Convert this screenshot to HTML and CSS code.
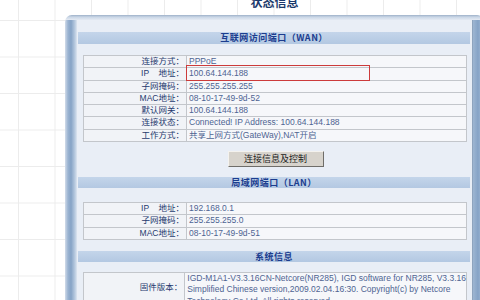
FILE: index.html
```html
<!DOCTYPE html>
<html>
<head>
<meta charset="utf-8">
<link rel="stylesheet" href="styles.css">
</head>
<body>
<div class="page">
  <div class="title">状态信息</div>
  <div class="panel">
    <div class="inner">
      <div class="bar bar-wan">互联网访问端口（WAN）</div>
      <table class="info t-wan">
        <tr><td class="lbl">连接方式：</td><td class="val">PPPoE</td></tr>
        <tr><td class="lbl">IP&nbsp;&nbsp;&nbsp;&nbsp;地址：</td><td class="val mark-cell"><span class="mark"></span>100.64.144.188</td></tr>
        <tr><td class="lbl">子网掩码：</td><td class="val">255.255.255.255</td></tr>
        <tr><td class="lbl">MAC地址：</td><td class="val">08-10-17-49-9d-52</td></tr>
        <tr><td class="lbl">默认网关：</td><td class="val">100.64.144.188</td></tr>
        <tr><td class="lbl">连接状态：</td><td class="val">Connected! IP Address: 100.64.144.188</td></tr>
        <tr><td class="lbl">工作方式：</td><td class="val">共享上网方式(GateWay),NAT开启</td></tr>
      </table>
      <div class="btn-row"><button class="btn">连接信息及控制</button></div>
      <div class="bar bar-lan">局域网端口（LAN）</div>
      <table class="info t-lan">
        <tr><td class="lbl">IP&nbsp;&nbsp;&nbsp;&nbsp;地址：</td><td class="val">192.168.0.1</td></tr>
        <tr><td class="lbl">子网掩码：</td><td class="val">255.255.255.0</td></tr>
        <tr><td class="lbl">MAC地址：</td><td class="val">08-10-17-49-9d-51</td></tr>
      </table>
      <div class="bar bar-sys">系统信息</div>
      <table class="info t-sys">
        <tr><td class="lbl lbl-top">固件版本：</td><td class="val multi">IGD-M1A1-V3.3.16CN-Netcore(NR285), IGD software for NR285, V3.3.16<br>Simplified Chinese version,2009.02.04.16:30. Copyright(c) by Netcore<br>Technology Co.Ltd. All rights reserved.</td></tr>
      </table>
    </div>
  </div>
</div>
</body>
</html>
```
FILE: styles.css
```css
html, body {
  margin: 0;
  padding: 0;
  width: 480px;
  height: 300px;
  overflow: hidden;
}
body {
  background-color: #ffffff;
  background-image:
    linear-gradient(to right, #ececec 1px, transparent 1px),
    linear-gradient(to bottom, #ececec 1px, transparent 1px);
  background-size: 36.5px 36.5px;
  background-position: 18px 20px;
  font-family: "Liberation Sans", "Noto Sans CJK SC", sans-serif;
}
.page {
  display: flex;
  flex-direction: column;
  padding-left: 65px;
  width: 419px;
}
.title {
  font-family: "Noto Sans CJK SC", sans-serif;
  font-weight: bold;
  font-size: 12px;
  line-height: 12px;
  height: 12px;
  color: #1c3a6c;
  text-align: center;
  margin-top: -4px;
  margin-bottom: 7px;
}
.panel {
  border-top-left-radius: 7px;
  border-top-right-radius: 7px;
  padding-top: 5px;
  padding-left: 12px;
  padding-right: 12px;
  background:
    linear-gradient(to bottom, #9db0c8 0, #c9d6e6 2px, #e4eaf3 5px, transparent 5px),
    linear-gradient(to right, #d2dcea 0, #9ab3d1 3px, #86a3c6 6px, #b9cbe0 10px, #dde5f0 12px, transparent 12px),
    linear-gradient(to left, #d2dcea 0, #9ab3d1 3px, #86a3c6 6px, #9eb6d2 11px, #7f92aa 12px, transparent 12px),
    #e9eef6;
  height: 300px;
}
.inner {
  display: flex;
  flex-direction: column;
  padding-top: 12px;
}
.bar {
  margin-left: 1px;
  margin-right: 2px;
  height: 12px;
  line-height: 12px;
  background: linear-gradient(to bottom, #c4d5ea, #b3c8e2);
  color: #1b3d8f;
  font-family: "Noto Sans CJK SC", sans-serif;
  font-weight: bold;
  font-size: 9px;
  letter-spacing: 0.5px;
  text-align: center;
}
.bar-lan { height: 11px; line-height: 11px; }
.bar-sys { height: 11px; line-height: 11px; }
.info {
  border-collapse: collapse;
  margin-left: 6px;
  margin-right: 5px;
  border: 1px solid #a4a8ae;
  font-size: 8.5px;
}
.t-wan { margin-top: 11px; }
.t-lan { margin-top: 14px; margin-bottom: 11px; }
.t-sys { margin-top: 10px; }
.info td {
  border: 1px solid #c3c6cb;
  height: 11.3px;
  line-height: 11.3px;
  padding: 0;
  white-space: nowrap;
}
.lbl {
  width: 100px;
  text-align: right;
  padding-right: 2px !important;
  color: #1f3a6e;
  background: #f1f3f7;
}
.lbl-top {
  vertical-align: top;
  padding-top: 9px !important;
}
.val {
  padding-left: 2px !important;
  color: #4e6492;
  background: #f6f7fa;
}
.mark-cell { position: relative; }
.mark {
  position: absolute;
  left: -1px;
  top: -3px;
  width: 182px;
  height: 14px;
  border: 1px solid #cc3b3b;
}
.multi {
  line-height: 11.5px !important;
  padding-top: 0 !important;
}
.btn-row {
  display: flex;
  justify-content: center;
  margin-top: 9px;
  margin-bottom: 10px;
}
.btn {
  width: 96px;
  height: 16px;
  padding: 0;
  font-family: "Noto Sans CJK SC", sans-serif;
  font-size: 9px;
  line-height: 14px;
  color: #222;
  background: #d7d3cc;
  border: 1px solid;
  border-color: #f4f2ee #6f6d69 #6f6d69 #f4f2ee;
  margin-left: 2px;
}
```
